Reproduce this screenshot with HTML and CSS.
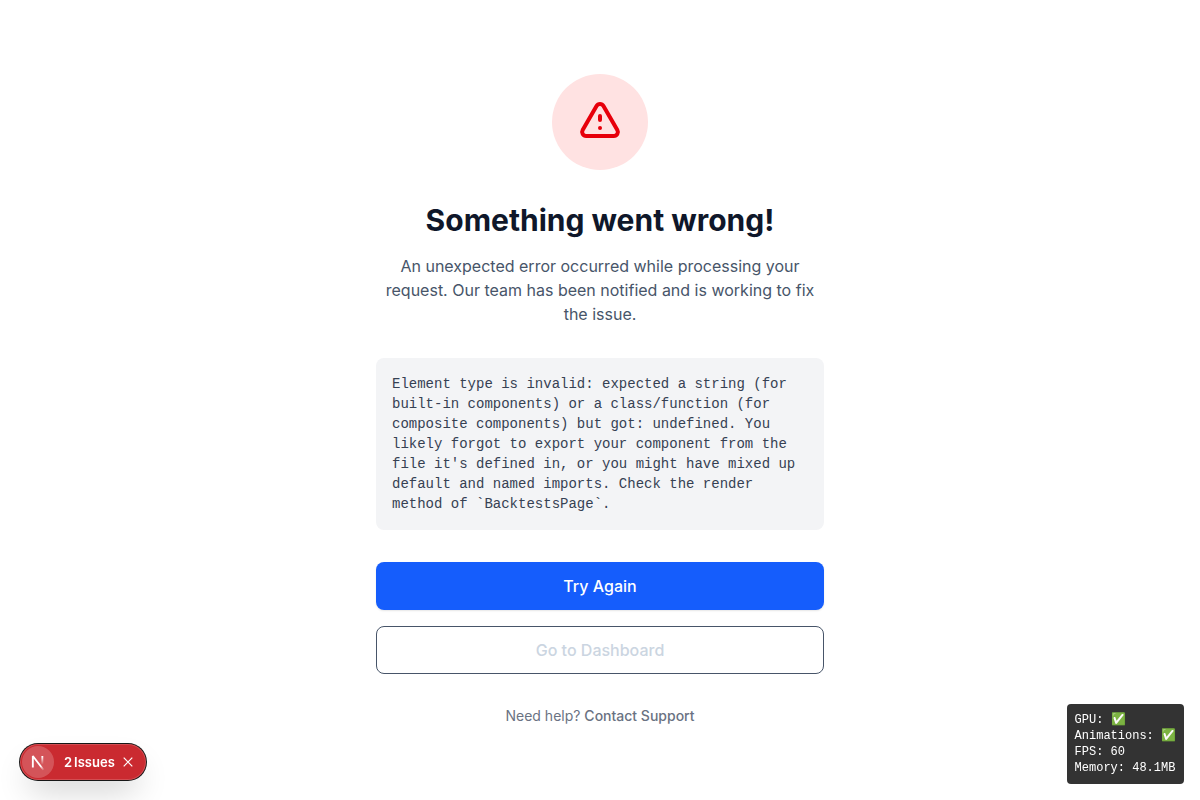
FILE: index.html
```html
<!DOCTYPE html>
<html lang="en">
<head>
  <meta charset="utf-8">
  <meta name="viewport" content="width=device-width, initial-scale=1">
  <title>Something went wrong!</title>
  <link rel="stylesheet" href="styles.css">
</head>
<body>
  <main class="error-page">
    <div class="error-content">
      <div class="error-icon">
        <svg width="48" height="48" viewBox="0 0 24 24" fill="none" stroke="currentColor" stroke-width="2" stroke-linecap="round" stroke-linejoin="round" aria-hidden="true">
          <path d="M12 9v2m0 4h.01m-6.938 4h13.856c1.54 0 2.502-1.667 1.732-3L13.732 4c-.77-1.333-2.694-1.333-3.464 0L3.34 16c-.77 1.333.192 3 1.732 3z"/>
        </svg>
      </div>
      <h1 class="error-title">Something went wrong!</h1>
      <p class="error-text">An unexpected error occurred while processing your request. Our team has been notified and is working to fix the issue.</p>
      <p class="error-detail">Element type is invalid: expected a string (for built-in components) or a class/function (for composite components) but got: undefined. You likely forgot to export your component from the file it's defined in, or you might have mixed up default and named imports. Check the render method of `BacktestsPage`.</p>
      <div class="actions">
        <button class="button button-primary" type="button">Try Again</button>
        <button class="button button-outline" type="button">Go to Dashboard</button>
      </div>
      <p class="help">Need help? <a class="help-link" href="#support">Contact Support</a></p>
    </div>
  </main>

  <div class="issues">
    <button class="issues-logo" type="button" aria-label="Open developer tools">
      <svg width="32" height="32" viewBox="0 0 32 32" fill="none" aria-hidden="true">
        <defs>
          <linearGradient id="diagonal" x1="9.955" y1="11.16" x2="15.46" y2="17.94" gradientUnits="userSpaceOnUse">
            <stop stop-color="white"/>
            <stop offset="0.604" stop-color="white" stop-opacity="0"/>
          </linearGradient>
          <linearGradient id="stem" x1="11.82" y1="1.4" x2="11.79" y2="9.62" gradientUnits="userSpaceOnUse">
            <stop stop-color="white"/>
            <stop offset="1" stop-color="white" stop-opacity="0"/>
          </linearGradient>
        </defs>
        <g transform="translate(8.5 9)" stroke-width="1.86">
          <path d="M13.3 15.2 2.34 1v11.6" stroke="url(#diagonal)" stroke-linejoin="bevel"/>
          <path d="M11.825 1v8.6" stroke="url(#stem)"/>
        </g>
      </svg>
    </button>
    <button class="issues-open" type="button"><span>2</span><span>Issues</span></button>
    <button class="issues-close" type="button" aria-label="Hide issues">
      <svg width="10" height="10" viewBox="0 0 10 10" fill="none" stroke="currentColor" stroke-width="1.2" aria-hidden="true">
        <path d="M.7.7l8.6 8.6M9.3.7L.7 9.3"/>
      </svg>
    </button>
  </div>

  <aside class="stats">
    <div>GPU: ✅</div>
    <div>Animations: ✅</div>
    <div>FPS: 60</div>
    <div>Memory: 48.1MB</div>
  </aside>
</body>
</html>
```
FILE: styles.css
```css
* {
  box-sizing: border-box;
}

body {
  margin: 0;
  background: #fff;
  font-family: Inter, "Liberation Sans", sans-serif;
  font-size: 16px;
  line-height: 24px;
}

h1,
p {
  margin: 0;
}

button {
  margin: 0;
  padding: 0;
  border: 0;
  background: none;
  color: inherit;
  font: inherit;
  cursor: pointer;
}

svg {
  display: block;
}

.error-page {
  display: flex;
  align-items: center;
  justify-content: center;
  min-height: 100vh;
  padding: 16px;
}

.error-content {
  width: 100%;
  max-width: 448px;
  text-align: center;
}

.error-icon {
  display: flex;
  align-items: center;
  justify-content: center;
  width: 96px;
  height: 96px;
  margin: 0 auto 32px;
  border-radius: 50%;
  background: #ffe2e2;
  color: #e7000b;
}

.error-title {
  margin-bottom: 16px;
  color: #0f172a;
  font-size: 30px;
  font-weight: 700;
  line-height: 36px;
}

.error-text {
  margin-bottom: 32px;
  color: #475569;
}

.error-detail {
  margin-bottom: 32px;
  padding: 16px;
  border-radius: 8px;
  background: #f3f4f6;
  color: #364153;
  font-family: "Liberation Mono", monospace;
  font-size: 14px;
  line-height: 20px;
  text-align: left;
  overflow-wrap: break-word;
}

.actions {
  display: flex;
  flex-direction: column;
  gap: 16px;
  margin-bottom: 32px;
}

.button {
  min-height: 48px;
  border-radius: 8px;
  font-weight: 500;
}

.button-primary {
  background: #155dfc;
  box-shadow: 0 1px 2px rgba(0, 0, 0, 0.1);
  color: #fff;
}

.button-outline {
  border: 1px solid #475569;
  color: #cbd5e1;
}

.help {
  color: #6a7282;
  font-size: 14px;
  line-height: 20px;
}

.help-link {
  color: inherit;
  font-weight: 500;
  text-decoration: none;
}

.issues {
  position: fixed;
  bottom: 20px;
  left: 20px;
  display: flex;
  align-items: center;
  height: 36px;
  padding: 2px 5px 2px 2px;
  border-radius: 18px;
  background: #ca2a30;
  box-shadow:
    0 0 0 1px #171717,
    inset 0 0 0 1px rgba(255, 255, 255, 0.17),
    0 16px 32px -8px rgba(0, 0, 0, 0.24);
  color: #fff;
  font-size: 13px;
  line-height: 16px;
}

.issues-logo {
  border-radius: 50%;
  background: rgba(255, 255, 255, 0.2);
}

.issues-open {
  display: flex;
  gap: 2px;
  padding: 8px 0 8px 10px;
  font-weight: 600;
}

.issues-close {
  display: flex;
  align-items: center;
  justify-content: center;
  width: 26px;
  height: 24px;
}

.stats {
  position: fixed;
  right: 16px;
  bottom: 16px;
  padding: 8px;
  border-radius: 4px;
  background: rgba(0, 0, 0, 0.8);
  color: #fff;
  font-family: "Liberation Mono", monospace;
  font-size: 12px;
  line-height: 16px;
}
```
